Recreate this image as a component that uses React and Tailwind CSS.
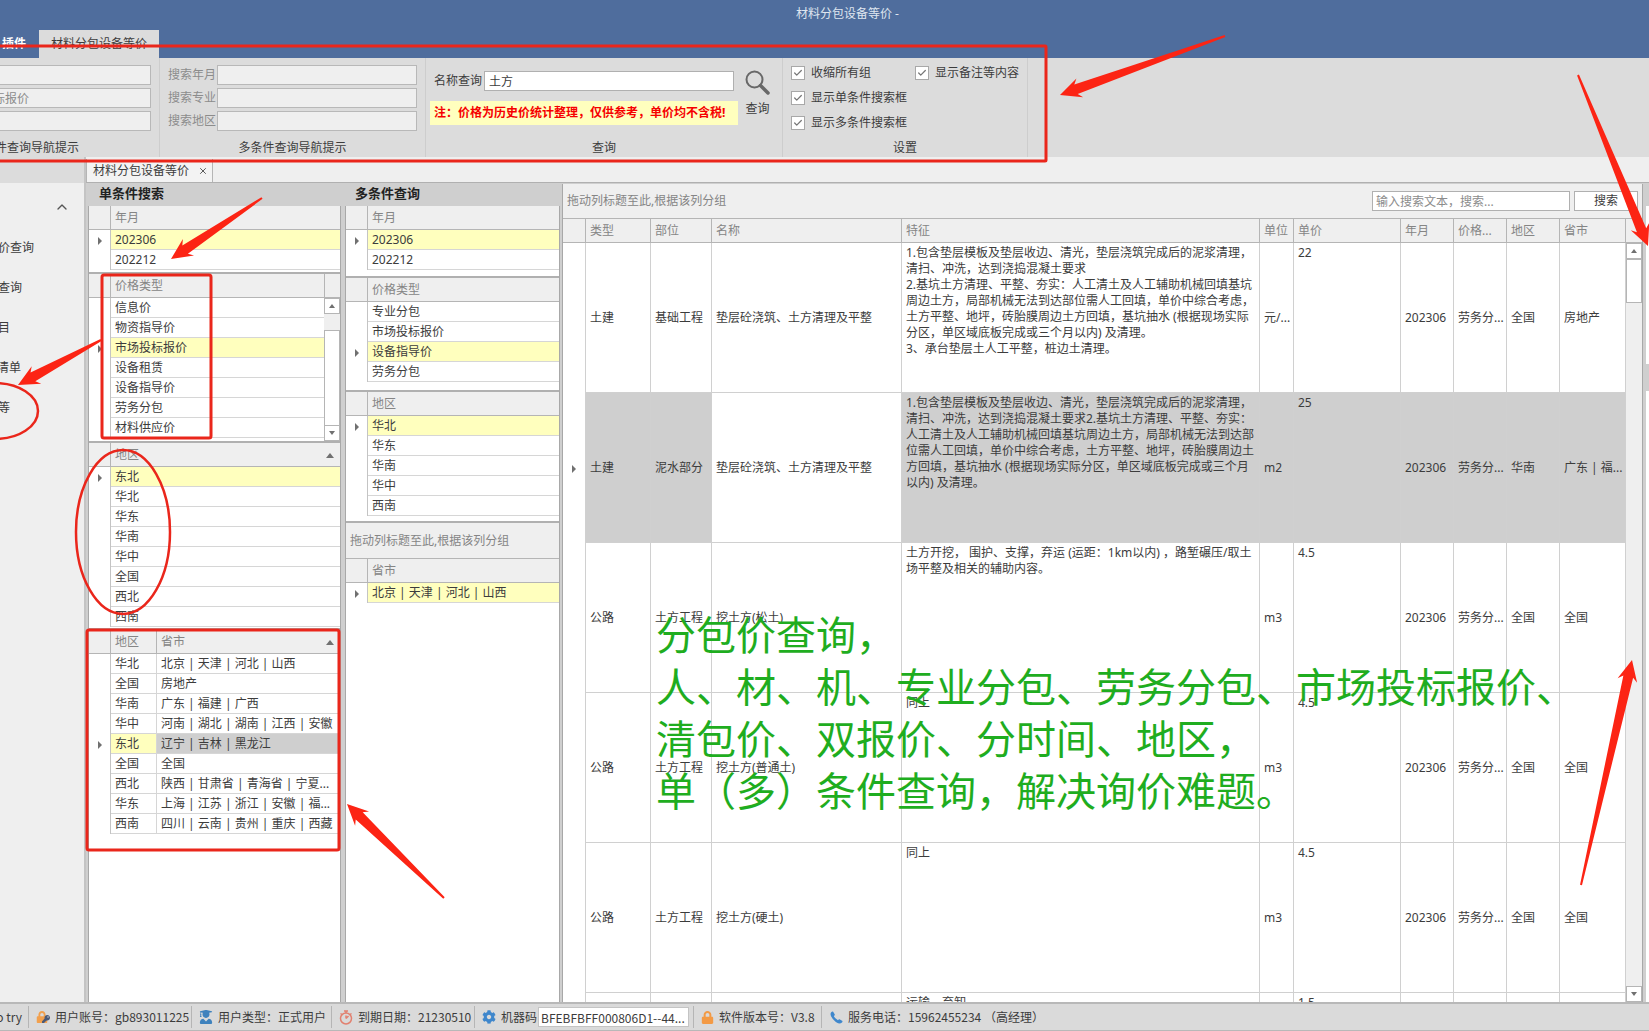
import React, { useState } from 'react';
import { Check, ChevronUp, X } from 'lucide-react';
import { FaLock, FaPhoneAlt, FaUserGraduate, FaKey, FaCog } from 'react-icons/fa';

const YEAR_MONTHS = [['202306'], ['202212']];

const PRICE_TYPES = [
  ['信息价'],
  ['物资指导价'],
  ['市场投标报价'],
  ['设备租赁'],
  ['设备指导价'],
  ['劳务分包'],
  ['材料供应价'],
];

const REGIONS = [['东北'], ['华北'], ['华东'], ['华南'], ['华中'], ['全国'], ['西北'], ['西南']];

const PROVINCES = [
  ['华北', '北京 | 天津 | 河北 | 山西'],
  ['全国', '房地产'],
  ['华南', '广东 | 福建 | 广西'],
  ['华中', '河南 | 湖北 | 湖南 | 江西 | 安徽'],
  ['东北', '辽宁 | 吉林 | 黑龙江'],
  ['全国', '全国'],
  ['西北', '陕西 | 甘肃省 | 青海省 | 宁夏...'],
  ['华东', '上海 | 江苏 | 浙江 | 安徽 | 福...'],
  ['西南', '四川 | 云南 | 贵州 | 重庆 | 西藏'],
];

const ITEMS = [
  {
    type: '土建',
    part: '基础工程',
    name: '垫层砼浇筑、土方清理及平整',
    feature: [
      '1.包含垫层模板及垫层收边、清光，垫层浇筑完成后的泥浆清理，',
      '清扫、冲洗，达到浇捣混凝土要求',
      '2.基坑土方清理、平整、夯实：人工清土及人工辅助机械回填基坑',
      '周边土方，局部机械无法到达部位需人工回填，单价中综合考虑，',
      '土方平整、地坪，砖胎膜周边土方回填，基坑抽水 (根据现场实际',
      '分区，单区域底板完成或三个月以内) 及清理。',
      '3、承台垫层土人工平整，桩边土清理。',
    ],
    unit: '元/...',
    price: '22',
    region: '全国',
    province: '房地产',
  },
  {
    type: '土建',
    part: '泥水部分',
    name: '垫层砼浇筑、土方清理及平整',
    feature: [
      '1.包含垫层模板及垫层收边、清光，垫层浇筑完成后的泥浆清理，',
      '清扫、冲洗，达到浇捣混凝土要求2.基坑土方清理、平整、夯实：',
      '人工清土及人工辅助机械回填基坑周边土方，局部机械无法到达部',
      '位需人工回填，单价中综合考虑，土方平整、地坪，砖胎膜周边土',
      '方回填，基坑抽水 (根据现场实际分区，单区域底板完成或三个月',
      '以内) 及清理。',
    ],
    unit: 'm2',
    price: '25',
    region: '华南',
    province: '广东 | 福...',
    active: true,
  },
  {
    type: '公路',
    part: '土方工程',
    name: '挖土方(松土)',
    feature: ['土方开挖， 围护、支撑，弃运 (运距：1km以内) ，路堑碾压/取土', '场平整及相关的辅助内容。'],
    unit: 'm3',
    price: '4.5',
    region: '全国',
    province: '全国',
  },
  {
    type: '公路',
    part: '土方工程',
    name: '挖土方(普通土)',
    feature: ['同上'],
    unit: 'm3',
    price: '4.5',
    region: '全国',
    province: '全国',
  },
  {
    type: '公路',
    part: '土方工程',
    name: '挖土方(硬土)',
    feature: ['同上'],
    unit: 'm3',
    price: '4.5',
    region: '全国',
    province: '全国',
  },
  {
    type: '公路',
    part: '土方工程',
    name: '挖土方',
    feature: ['运输、弃卸'],
    unit: 'm3',
    price: '1.5',
    region: '全国',
    province: '全国',
  },
];

const Triangle = ({ dir }) => {
  const points = { right: '2,0 6,4 2,8', up: '0,7 4,2 8,7', scrollUp: '1,6 4,2 7,6', scrollDown: '1,2 7,2 4,6' };
  return (
    <svg width="8" height="8" viewBox="0 0 8 8" className="inline-block" aria-hidden="true">
      <polygon points={points[dir]} fill="#707070" />
    </svg>
  );
};

// Row list with an indicator column on the left, used in both filter panels
const FilterGrid = ({ columns, rows, active, secondActive = 'bg-[#cfcfcf]' }) => (
  <table className="w-full table-fixed border-separate border-spacing-0">
    <colgroup>
      <col className="w-[22px]" />
      {columns.map(col => (
        <col key={col.label} className={col.width} />
      ))}
    </colgroup>
    <thead>
      <tr className="bg-[#efefef] text-[#858585]">
        <th className="h-6 border-r border-b border-[#b5b5b5] p-0"></th>
        {columns.map(col => (
          <th key={col.label} className={`h-6 border-b border-[#b5b5b5] p-0 pl-1 text-left font-normal ${col.width ? 'border-r' : ''}`}>
            <div className="flex items-center justify-between pr-1.5">
              <span>{col.label}</span>
              {col.sorted && <Triangle dir="up" />}
            </div>
          </th>
        ))}
      </tr>
    </thead>
    <tbody>
      {rows.map((row, i) => (
        <tr key={i}>
          <td className="h-5 border-r border-[#c4c4c4] p-0 text-center leading-3">
            {i === active && <Triangle dir="right" />}
          </td>
          {row.map((cell, j) => (
            <td
              key={j}
              className={`h-5 overflow-hidden border-b border-[#d6d6d6] p-0 pl-1 whitespace-nowrap ${
                j < row.length - 1 ? 'border-r' : ''
              } ${i === active ? (j === 0 ? 'bg-[#ffffbe]' : secondActive) : ''}`}
            >
              {cell}
            </td>
          ))}
        </tr>
      ))}
    </tbody>
  </table>
);

const ScrollButton = ({ dir, label }) => (
  <button type="button" aria-label={label} className="flex h-4 w-full shrink-0 items-center justify-center border border-[#b5b5b5] bg-white">
    <Triangle dir={dir} />
  </button>
);

const RibbonGroup = ({ title, className, children }) => (
  <section className={`flex shrink-0 flex-col border-r border-[#cdcdcd] ${className}`}>
    <div className="flex-1">{children}</div>
    <h2 className="h-[18px] text-center leading-[18px]">{title}</h2>
  </section>
);

const RibbonField = ({ id, label, value = '' }) => (
  <div className="flex items-center">
    <label htmlFor={id} className="w-[49px] shrink-0 whitespace-nowrap text-[#8c8c8c]">{label}</label>
    <input id={id} defaultValue={value} className="h-5 w-full min-w-0 border border-[#b8b8b8] bg-[#efefef] px-1 text-[#8c8c8c]" />
  </div>
);

const CheckOption = ({ label }) => {
  const [checked, setChecked] = useState(true);
  return (
    <label className="flex h-[25px] items-center gap-1.5">
      <span className="grid">
        <input
          type="checkbox"
          checked={checked}
          onChange={e => setChecked(e.target.checked)}
          className="col-start-1 row-start-1 h-[14px] w-[14px] appearance-none border border-[#a8a8a8] bg-white"
        />
        {checked && <Check size={10} strokeWidth={3} className="pointer-events-none col-start-1 row-start-1 place-self-center text-[#777]" />}
      </span>
      {label}
    </label>
  );
};

const Magnifier = () => (
  <svg width="25" height="25" viewBox="0 0 25 25" fill="none" stroke="#686868" aria-hidden="true">
    <circle cx="9.5" cy="9.5" r="8" strokeWidth="2" />
    <path d="M15.5 15.5L23 23" strokeWidth="3.5" strokeLinecap="round" />
  </svg>
);

const Ribbon = () => (
  <div className="flex h-[99px] shrink-0 bg-[#dcdcdc]">
    {/* The first group runs off the left side */}
    <RibbonGroup title="单条件查询导航提示" className="-ml-[109px] w-[269px]">
      <div className="flex flex-col gap-[3px] pt-[7px] pr-2">
        <RibbonField id="one-month" label="搜索年月" />
        <RibbonField id="one-type" label="搜索专业" value="　市场投标报价" />
        <RibbonField id="one-region" label="搜索地区" />
      </div>
    </RibbonGroup>
    <RibbonGroup title="多条件查询导航提示" className="w-[266px]">
      <div className="flex flex-col gap-[3px] pt-[7px] pr-2 pl-2">
        <RibbonField id="multi-month" label="搜索年月" />
        <RibbonField id="multi-type" label="搜索专业" />
        <RibbonField id="multi-region" label="搜索地区" />
      </div>
    </RibbonGroup>
    <RibbonGroup title="查询" className="w-[357px]">
      <div className="flex pl-1">
        <div className="flex w-[308px] flex-col gap-2.5 pt-[13px]">
          <div className="flex items-center pl-1">
            <label htmlFor="name-query" className="w-[50px] shrink-0">名称查询</label>
            <input id="name-query" defaultValue="土方" className="h-5 w-[250px] border border-[#b0b0b0] bg-white px-1" />
          </div>
          <p className="h-6 bg-[#ffffbe] pl-1 leading-6 font-bold whitespace-nowrap text-[#f60000]">
            注：价格为历史价统计整理，仅供参考，单价均不含税!
          </p>
        </div>
        <button type="button" className="ml-[7px] flex flex-col items-center pt-3">
          <Magnifier />
          <span className="mt-0.5 leading-6">查询</span>
        </button>
      </div>
    </RibbonGroup>
    <RibbonGroup title="设置" className="w-[245px]">
      <div className="grid grid-cols-[124px_1fr] pt-0.5 pl-2 whitespace-nowrap">
        <CheckOption label="收缩所有组" />
        <CheckOption label="显示备注等内容" />
        <div className="col-span-2"><CheckOption label="显示单条件搜索框" /></div>
        <div className="col-span-2"><CheckOption label="显示多条件搜索框" /></div>
      </div>
    </RibbonGroup>
  </div>
);

const SideNav = () => (
  <aside className="flex w-[86px] shrink-0 flex-col border-r-2 border-[#c4c4c4] bg-[#efefef]">
    <div className="h-[26px] bg-[#dcdcdc]"></div>
    <button type="button" aria-label="收起" className="mt-4 mr-3.5 self-end text-[#555]">
      <ChevronUp size={16} strokeWidth={2} />
    </button>
    <nav className="-ml-12 mt-[13px] flex flex-col">
      <a href="#price" className="h-10 w-[82px] text-right leading-10">材料价查询</a>
      <a href="#query" className="h-10 w-[70px] text-right leading-10">指标查询</a>
      <a href="#project" className="h-10 w-[58px] text-right leading-10">项目</a>
      <a href="#list" className="h-10 w-[69px] text-right leading-10">项目清单</a>
      <a href="#equipment" className="h-10 w-[58px] text-right leading-10">设备等</a>
    </nav>
  </aside>
);

const SinglePanel = () => (
  <section className="flex w-[253px] shrink-0 flex-col">
    <h2 className="h-[22px] shrink-0 pl-[11px] text-[13px] leading-[18px] font-bold text-[#222]">单条件搜索</h2>
    <div className="flex min-h-0 flex-1 flex-col border-x border-[#a8a8a8] bg-white">
      <div className="h-[68px] shrink-0 border-b-2 border-[#b0b0b0]">
        <FilterGrid columns={[{ label: '年月' }]} rows={YEAR_MONTHS} active={0} />
      </div>
      <div className="flex h-[169px] shrink-0 border-b-2 border-[#b0b0b0]">
        <div className="min-w-0 flex-1">
          <FilterGrid columns={[{ label: '价格类型' }]} rows={PRICE_TYPES} active={2} />
        </div>
        <div className="flex w-4 flex-col bg-[#efefef]">
          <div className="h-6 border-b border-l border-[#b5b5b5]"></div>
          <ScrollButton dir="scrollUp" label="向上" />
          <div className="mt-4 flex-1 border-x border-t border-[#b5b5b5] bg-white"></div>
          <ScrollButton dir="scrollDown" label="向下" />
        </div>
      </div>
      <div className="h-[187px] shrink-0 overflow-hidden border-b-2 border-[#b0b0b0]">
        <FilterGrid columns={[{ label: '地区', sorted: true }]} rows={REGIONS} active={0} />
      </div>
      <FilterGrid columns={[{ label: '地区', width: 'w-[46px]' }, { label: '省市', sorted: true }]} rows={PROVINCES} active={4} />
    </div>
  </section>
);

const MultiPanel = () => (
  <section className="flex w-[215px] shrink-0 flex-col">
    <h2 className="h-[22px] shrink-0 pl-2.5 text-[13px] leading-[18px] font-bold text-[#222]">多条件查询</h2>
    <div className="flex min-h-0 flex-1 flex-col border-x border-[#a8a8a8] bg-white">
      <div className="h-[72px] shrink-0 border-b-2 border-[#b0b0b0]">
        <FilterGrid columns={[{ label: '年月' }]} rows={YEAR_MONTHS} active={0} />
      </div>
      <div className="h-[114px] shrink-0 border-b-2 border-[#b0b0b0]">
        <FilterGrid columns={[{ label: '价格类型' }]} rows={[['专业分包'], ['市场投标报价'], ['设备指导价'], ['劳务分包']]} active={2} />
      </div>
      <div className="h-[131px] shrink-0 border-b-2 border-[#b0b0b0]">
        <FilterGrid columns={[{ label: '地区' }]} rows={[['华北'], ['华东'], ['华南'], ['华中'], ['西南']]} active={0} />
      </div>
      <p className="h-9 shrink-0 border-b border-[#b5b5b5] bg-[#efefef] pl-1 leading-9 text-[#858585]">拖动列标题至此,根据该列分组</p>
      <FilterGrid columns={[{ label: '省市' }]} rows={[['北京 | 天津 | 河北 | 山西']]} active={0} />
    </div>
  </section>
);

const ResultTable = () => {
  const cell = 'h-[150px] border-r border-b border-[#d0d0d0] p-0 pl-1 whitespace-nowrap';
  const heads = ['类型', '部位', '名称', '特征', '单位', '单价', '年月', '价格...', '地区', '省市'];
  return (
    <table className="w-full table-fixed border-separate border-spacing-0">
      <colgroup>
        <col className="w-[23px]" />
        <col className="w-[65px]" />
        <col className="w-[61px]" />
        <col className="w-[190px]" />
        <col />
        <col className="w-[34px]" />
        <col className="w-[107px]" />
        <col className="w-[53px]" />
        <col className="w-[53px]" />
        <col className="w-[53px]" />
        <col className="w-[66px]" />
      </colgroup>
      <thead>
        <tr className="bg-[#efefef] text-[#858585]">
          <th className="h-6 border-r border-b border-[#b5b5b5] p-0"></th>
          {heads.map(head => (
            <th key={head} className="h-6 border-r border-b border-[#b5b5b5] p-0 pl-1 text-left font-normal whitespace-nowrap">{head}</th>
          ))}
        </tr>
      </thead>
      <tbody>
        {ITEMS.map((item, i) => {
          const bg = item.active ? 'bg-[#cfcfcf]' : '';
          return (
            <tr key={i}>
              <td className="h-[150px] border-r border-[#d0d0d0] p-0 text-center">{item.active && <Triangle dir="right" />}</td>
              <td className={`${cell} ${bg}`}>{item.type}</td>
              <td className={`${cell} ${bg}`}>{item.part}</td>
              <td className={cell}>{item.name}</td>
              <td className={`${cell} ${bg} overflow-hidden pt-0.5 align-top leading-4`}>
                {item.feature.map(line => (
                  <div key={line}>{line}</div>
                ))}
              </td>
              <td className={`${cell} ${bg}`}>{item.unit}</td>
              <td className={`${cell} ${bg} pt-0.5 align-top leading-4`}>{item.price}</td>
              <td className={`${cell} ${bg}`}>202306</td>
              <td className={`${cell} ${bg}`}>劳务分...</td>
              <td className={`${cell} ${bg}`}>{item.region}</td>
              <td className={`${cell} ${bg}`}>{item.province}</td>
            </tr>
          );
        })}
      </tbody>
    </table>
  );
};

const ResultPanel = () => (
  <section className="flex min-w-0 flex-1 flex-col border-x border-[#a8a8a8] bg-white">
    <div className="flex h-[35px] shrink-0 items-center border-b border-[#b5b5b5] bg-[#efefef] pr-1 pl-1">
      <p className="flex-1 text-[#858585]">拖动列标题至此,根据该列分组</p>
      <input aria-label="搜索文本" placeholder="输入搜索文本，搜索..." className="h-5 w-[198px] border border-[#b0b0b0] bg-white px-[3px] placeholder:text-[#8c8c8c]" />
      <button type="button" className="ml-1 h-5 w-16 border border-[#b0b0b0] bg-white leading-[18px]">搜索</button>
    </div>
    <div className="flex min-h-0 flex-1">
      <div className="min-w-0 flex-1 overflow-hidden">
        <ResultTable />
      </div>
      <div className="flex w-4 flex-col bg-[#efefef]">
        <div className="h-6 border-b border-[#b5b5b5]"></div>
        <ScrollButton dir="scrollUp" label="向上" />
        <div className="h-11 border border-[#b5b5b5] bg-white"></div>
        <div className="flex-1"></div>
        <ScrollButton dir="scrollDown" label="向下" />
      </div>
    </div>
  </section>
);

const StatusItem = ({ icon, className, children }) => (
  <div className={`flex h-[22px] shrink-0 items-center gap-[5px] border-r border-[#b5b5b5] pl-[7px] whitespace-nowrap ${className}`}>
    {icon}
    {children}
  </div>
);

const Stopwatch = () => (
  <svg width="14" height="15" viewBox="0 0 14 15" fill="none" stroke="#e2806f" strokeWidth="1.5" aria-hidden="true">
    <circle cx="7" cy="8.5" r="5.5" />
    <path d="M5 1h4M7 1v2M7 8.5L9.5 6M7 5.5v3M1.5 3.5l1.5 1M12.5 3.5l-1.5 1" />
  </svg>
);

const StatusBar = () => (
  <footer className="flex h-[29px] shrink-0 items-center border-t-2 border-b border-[#b8b8b8] bg-[#dadada] font-['Noto_Sans_CJK_SC',sans-serif]">
    <div className="flex h-[22px] w-[29px] shrink-0 items-center justify-end overflow-hidden border-r border-[#b5b5b5] pr-1.5 whitespace-nowrap">to try</div>
    <StatusItem
      className="w-[163px]"
      icon={
        <span className="flex items-end">
          <FaLock size={12} color="#f2a04d" />
          <FaKey size={8} color="#4a5a78" className="-ml-1.5" />
        </span>
      }
    >
      用户账号：gb893011225
    </StatusItem>
    <StatusItem className="w-[140px]" icon={<FaUserGraduate size={14} color="#3f82bd" />}>用户类型：正式用户</StatusItem>
    <StatusItem className="w-[143px]" icon={<Stopwatch />}>到期日期：21230510</StatusItem>
    <StatusItem className="w-[219px]" icon={<FaCog size={14} color="#3f87cc" />}>
      <label htmlFor="machine-code">机器码</label>
      <input id="machine-code" readOnly value="BFEBFBFF000806D1--44..." className="-ml-1 h-5 w-[151px] border border-[#c4c4c4] bg-white px-0.5" />
    </StatusItem>
    <StatusItem className="w-[128px]" icon={<FaLock size={13} color="#f39a45" />}>软件版本号：V3.8</StatusItem>
    <div className="flex items-center gap-[5px] pl-2 whitespace-nowrap">
      <svg width="13" height="13" viewBox="0 0 13 13" fill="#3f87cc" aria-hidden="true">
        <path d="M1 1.5Q2 .3 3 .5L4.8 3.6Q4.9 4.3 3.8 5Q4.8 7.8 8 9.2Q8.8 8 9.5 8.3L12.5 10Q12.7 11 11.3 12.1Q9.5 13.3 5.8 10.9Q2.6 8.7 1.2 5.6Q0 3 1 1.5Z" />
      </svg>
      服务电话：15962455234 （高经理）
    </div>
  </footer>
);

// Tapered arrow: a point at the tail, widening to the head
const Arrow = ({ from, to }) => {
  const [x1, y1] = from;
  const [x2, y2] = to;
  const len = Math.hypot(x1 - x2, y1 - y2);
  const ux = (x1 - x2) / len;
  const uy = (y1 - y2) / len;
  const at = (along, side) => `${x2 + ux * along - uy * side},${y2 + uy * along + ux * side}`;
  const points = [at(0, 0), at(21, 10), at(17, 5), at(len, 1), at(len, -1), at(17, -5), at(21, -10)];
  return <polygon points={points.join(' ')} fill="#fc2414" />;
};

const Annotations = () => (
  <div className="pointer-events-none absolute inset-0 overflow-hidden">
    <p className="absolute top-[609px] left-[656px] text-[40px] leading-[52px] whitespace-pre text-[#1fad1f]">
      分包价查询，{'\n'}
      人、材、机、专业分包、劳务分包、市场投标报价、{'\n'}
      清包价、双报价、分时间、地区，{'\n'}
      单（多）条件查询，解决询价难题。
    </p>
    <svg className="absolute top-0 left-0 h-full w-full" fill="none" stroke="#ea261b" strokeWidth="3" aria-hidden="true">
      <rect x="-6" y="46" width="1052" height="115" rx="1" />
      <rect x="102" y="275" width="109" height="163" rx="2" />
      <rect x="87" y="630" width="252" height="220" rx="2" />
      <ellipse cx="123" cy="532" rx="47" ry="82" strokeWidth="2.5" />
      <ellipse cx="-5" cy="411" rx="43" ry="28" strokeWidth="2.5" />
      <g stroke="none">
        <Arrow from={[1225, 36]} to={[1060, 95]} />
        <Arrow from={[1578, 75]} to={[1648, 246]} />
        <Arrow from={[1581, 885]} to={[1632, 660]} />
        <Arrow from={[262, 198]} to={[171, 259]} />
        <Arrow from={[101, 340]} to={[18, 385]} />
        <Arrow from={[444, 898]} to={[347, 804]} />
      </g>
    </svg>
  </div>
);

const App = () => {
  return (
    <div className="relative flex h-screen flex-col overflow-hidden bg-[#efefef] font-['Noto_Sans','Noto_Sans_CJK_SC',sans-serif] text-xs text-[#3c3c3c]">
      <header className="flex h-[58px] shrink-0 flex-col bg-[#4f6d9d]">
        <h1 className="h-[30px] pl-[46px] text-center leading-7 text-[#dfe6f0]">材料分包设备等价 -</h1>
        <div className="flex flex-1">
          <button type="button" className="-ml-3 w-[51px] pr-[13px] text-right font-bold whitespace-nowrap text-white">插件</button>
          <button type="button" className="w-[120px] bg-[#dcdcdc]">材料分包设备等价</button>
        </div>
      </header>
      <Ribbon />
      <div className="flex min-h-0 flex-1">
        <SideNav />
        <main className="flex min-w-0 flex-1 flex-col">
          <div className="flex h-[26px] shrink-0 items-end border-b border-[#b0b0b0]">
            <div className="flex h-[23px] w-[127px] items-center justify-between border-r border-l border-[#b5b5b5] bg-[#f3f3f3] pr-1 pl-1.5">
              材料分包设备等价
              <button type="button" aria-label="关闭"><X size={10} /></button>
            </div>
          </div>
          <div className="flex min-h-0 flex-1 bg-[#cfcfcf] pt-px pl-0.5">
            <SinglePanel />
            <div className="w-1 shrink-0"></div>
            <MultiPanel />
            <div className="w-0.5 shrink-0"></div>
            <ResultPanel />
            <div className="w-[3px] shrink-0"></div>
            {/* Edge of the panel docked on the right */}
            <div className="flex w-[3px] shrink-0 flex-col bg-white">
              <div className="h-[22px] bg-[#cfcfcf]"></div>
              <div className="h-[158px]"></div>
              <div className="h-[27px] bg-[#cfcfcf]"></div>
            </div>
          </div>
        </main>
      </div>
      <StatusBar />
      <Annotations />
    </div>
  );
};

export default App;
